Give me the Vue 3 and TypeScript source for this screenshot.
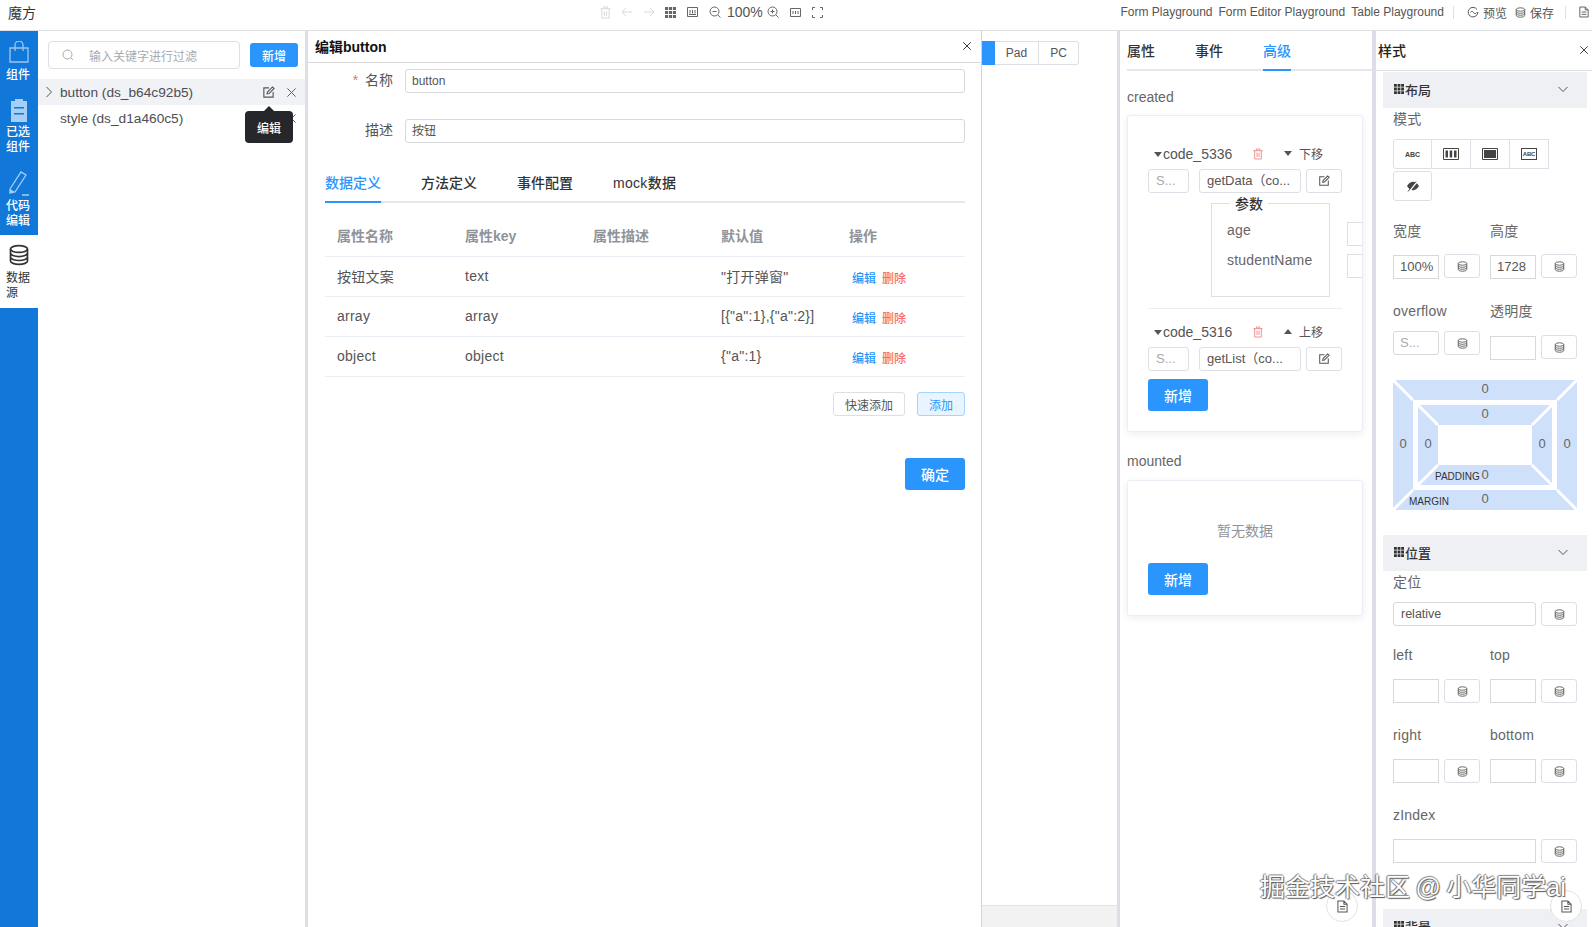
<script setup lang="ts">
const dsRows = [
  { name: '按钮文案', key: 'text', value: '"打开弹窗"' },
  { name: 'array', key: 'array', value: '[{"a":1},{"a":2}]' },
  { name: 'object', key: 'object', value: '{"a":1}' },
]
const tableHead = ['属性名称', '属性key', '属性描述', '默认值', '操作']
const dialogTabs = ['数据定义', '方法定义', '事件配置', 'mock数据']
</script>

<template>
  <div class="page">
    <svg class="defs" width="0" height="0">
      <symbol id="i-db" viewBox="0 0 14 14"><g fill="none" stroke="currentColor" stroke-width="1.1"><ellipse cx="7" cy="3.2" rx="5.4" ry="2.2"/><path d="M1.6 3.2v7.6c0 1.2 2.4 2.2 5.4 2.2s5.4-1 5.4-2.2V3.2M1.6 5.8c0 1.2 2.4 2.2 5.4 2.2s5.4-1 5.4-2.2M1.6 8.3c0 1.2 2.4 2.2 5.4 2.2s5.4-1 5.4-2.2"/></g></symbol>
      <symbol id="i-edit" viewBox="0 0 14 14"><g fill="none" stroke="currentColor" stroke-width="1.2"><path d="M7.5 2H2v10h10V6.5"/><path d="M5.5 8.5l.4-2L11.3 1l1.7 1.7-5.4 5.4z"/></g></symbol>
      <symbol id="i-x" viewBox="0 0 12 12"><path d="M1.5 1.5l9 9M10.5 1.5l-9 9" fill="none" stroke="currentColor" stroke-width="1"/></symbol>
      <symbol id="i-grid" viewBox="0 0 12 12"><path fill="currentColor" d="M0 0h3.4v3.4H0zM4.3 0h3.4v3.4H4.3zM8.6 0H12v3.4H8.6zM0 4.3h3.4v3.4H0zM4.3 4.3h3.4v3.4H4.3zM8.6 4.3H12v3.4H8.6zM0 8.6h3.4V12H0zM4.3 8.6h3.4V12H4.3zM8.6 8.6H12V12H8.6z"/></symbol>
      <symbol id="i-chev" viewBox="0 0 12 12"><path d="M1.5 4l4.5 4.5L10.500 4" fill="none" stroke="currentColor" stroke-width="1"/></symbol>
      <symbol id="i-trash" viewBox="0 0 12 14"><g fill="none" stroke="currentColor" stroke-width="1.100"><path d="M0.500 3h11M4 3V1h4v2M2 3v10h8V3M4.800 5.500v5M7.200 5.500v5"/></g></symbol>
      <symbol id="i-doc" viewBox="0 0 12 14"><g fill="none" stroke="currentColor" stroke-width="1.100"><path d="M1 1h6.500L11 4.500V13H1zM7.500 1v3.500H11M3.200 7h5.600M3.200 9.800h5.600"/></g></symbol>
    </svg>

    <header class="topbar">
      <span class="brand">魔方</span>
      <div class="tools">
        <svg class="ti faint" width="11" height="13"><use href="#i-trash"/></svg>
        <svg class="ti faint" width="12" height="10" viewBox="0 0 12 10"><path d="M11 5H1.500M5 1L1 5l4 4" fill="none" stroke="currentColor"/></svg>
        <svg class="ti faint" width="12" height="10" viewBox="0 0 12 10"><path d="M1 5h9.500M7 1l4 4-4 4" fill="none" stroke="currentColor"/></svg>
        <svg class="ti dark" width="11" height="11"><use href="#i-grid"/></svg>
        <svg class="ti dark" width="11" height="10" viewBox="0 0 11 10"><path d="M.5.500h10v9H.5zM3 3v3.500M5.500 3v3.500M8 3v3.500M2 7.500h7" fill="none" stroke="currentColor"/></svg>
        <svg class="ti dark tight" width="12" height="12" viewBox="0 0 12 12"><g fill="none" stroke="currentColor"><circle cx="5.500" cy="5.500" r="4.500"/><path d="M3.500 5.500h4M9 9l2.500 2.500"/></g></svg>
        <span class="zoom">100%</span>
        <svg class="ti dark" width="12" height="12" viewBox="0 0 12 12"><g fill="none" stroke="currentColor"><circle cx="5.500" cy="5.500" r="4.500"/><path d="M3.500 5.500h4M5.500 3.500v4M9 9l2.500 2.500"/></g></svg>
        <svg class="ti dark" width="11" height="9" viewBox="0 0 11 9"><path d="M.5.500h10v8H.5zM3 3v3M5.500 3v3M8 3v3" fill="none" stroke="currentColor"/></svg>
        <svg class="ti dark" width="11" height="11" viewBox="0 0 11 11"><path d="M.5 3V.5H3M8 .5h2.500V3M10.500 8v2.500H8M3 10.500H.5V8" fill="none" stroke="currentColor"/></svg>
      </div>
      <div class="links">
        <a>Form Playground</a><a>Form Editor Playground</a><a>Table Playground</a>
        <i class="sep"></i>
        <svg class="ti" width="12" height="12" viewBox="0 0 12 12"><g fill="none" stroke="currentColor"><path d="M10 3.500A4.800 4.800 0 1 0 10.800 6"/><path d="M3.500 6.500c1-1.500 2-1.500 3 0s2 1.500 3 0"/></g></svg>
        <span class="act">预览</span>
        <svg class="ti" width="11" height="11"><use href="#i-db"/></svg>
        <span class="act">保存</span>
        <i class="sep"></i>
        <svg class="ti" width="10" height="12"><use href="#i-doc"/></svg>
      </div>
    </header>

    <div class="body">
      <nav class="rail">
        <div class="rail-item h61">
          <svg width="22" height="22" viewBox="0 0 22 22"><g fill="none" stroke="#9ac8f5" stroke-width="1.300"><path d="M2 7h18v14H2zM7 10V4a4 4 0 0 1 8 0v6"/></g></svg>
          <span>组件</span>
        </div>
        <div class="rail-item h72">
          <svg width="20" height="24" viewBox="0 0 20 24"><path fill="#a5cff5" d="M2 3h4V1h8v2h4v21H2z"/><path fill="#1177d9" d="M5 9h10v1.500H5zM5 15h10v1.500H5z"/></svg>
          <span>已选<br>组件</span>
        </div>
        <div class="rail-item h72">
          <svg width="22" height="26" viewBox="0 0 22 26"><g fill="none" stroke="#a5cff5" stroke-width="1.300"><path d="M2 19L13 2l5 3L7 22l-5 1zM14 25h7"/></g><path fill="#a5cff5" d="M2 19l5 3-5 1z"/></svg>
          <span>代码<br>编辑</span>
        </div>
        <div class="rail-item h73 active">
          <svg width="22" height="22" viewBox="0 0 14 14"><use href="#i-db"/></svg>
          <span>数据<br>源</span>
        </div>
      </nav>

      <aside class="tree">
        <div class="tree-top">
          <div class="search">
            <svg width="12" height="12" viewBox="0 0 12 12"><g fill="none" stroke="#a8abb2"><circle cx="5.500" cy="5.500" r="4.500"/><path d="M9 9l2 2"/></g></svg>
            <span>输入关键字进行过滤</span>
          </div>
          <button class="btn primary small">新增</button>
        </div>
        <div class="tree-row hovered">
          <svg class="caret" width="8" height="12" viewBox="0 0 8 12"><path d="M1.500 1l5 5-5 5" fill="none" stroke="#555"/></svg>
          <span class="tree-label">button (ds_b64c92b5)</span>
          <svg class="tree-edit" width="13" height="13"><use href="#i-edit"/></svg>
          <svg class="tree-x" width="11" height="11"><use href="#i-x"/></svg>
        </div>
        <div class="tree-row">
          <span class="caret-space"></span>
          <span class="tree-label">style (ds_d1a460c5)</span>
          <svg class="tree-x" width="11" height="11"><use href="#i-x"/></svg>
        </div>
        <div class="tooltip">编辑</div>
      </aside>

      <section class="dialog">
        <div class="dlg-title"><span>编辑button</span><svg width="10" height="10"><use href="#i-x"/></svg></div>
        <div class="form-row first">
          <label><em>*</em> 名称</label>
          <div class="field">button</div>
        </div>
        <div class="form-row second">
          <label>描述</label>
          <div class="field">按钮</div>
        </div>
        <div class="dlg-tabs">
          <span v-for="(t, i) in dialogTabs" :key="t" :class="{ on: i === 0 }">{{ t }}</span>
        </div>
        <div class="table">
          <div class="tr th">
            <span v-for="h in tableHead" :key="h">{{ h }}</span>
          </div>
          <div v-for="r in dsRows" :key="r.key" class="tr">
            <span>{{ r.name }}</span><span>{{ r.key }}</span><span></span><span>{{ r.value }}</span>
            <span class="ops"><b class="blue">编辑</b><b class="red">删除</b></span>
          </div>
        </div>
        <div class="dlg-actions">
          <button class="btn ghost">快速添加</button>
          <button class="btn light">添加</button>
        </div>
        <div class="dlg-ok"><button class="btn primary big">确定</button></div>
      </section>

      <section class="canvas">
        <div class="devices">
          <i class="dev-on"></i><span>Pad</span><span>PC</span>
        </div>
        <div class="canvas-foot"></div>
      </section>

      <section class="events">
        <div class="ev-tabs"><span>属性</span><span>事件</span><span class="on">高级</span></div>
        <div class="ev-label first">created</div>
        <div class="card c1">
          <div class="code-head">
            <i class="tri"></i><span class="code-name">code_5336</span>
            <svg class="del" width="10" height="12"><use href="#i-trash"/></svg>
            <i class="tri small"></i><span class="move">下移</span>
          </div>
          <div class="code-row">
            <div class="mini ph w40">S...</div><div class="mini w101">getData（co...</div>
            <div class="mini icon"><svg width="12" height="12"><use href="#i-edit"/></svg></div>
          </div>
          <div class="params-wrap">
            <div class="params">
              <strong>参数</strong>
              <p>age</p><p>studentName</p>
            </div>
            <div class="param-stubs"><i></i><i></i></div>
          </div>
          <hr>
          <div class="code-head">
            <i class="tri"></i><span class="code-name">code_5316</span>
            <svg class="del" width="10" height="12"><use href="#i-trash"/></svg>
            <i class="tri small up"></i><span class="move">上移</span>
          </div>
          <div class="code-row">
            <div class="mini ph w40">S...</div><div class="mini w101">getList（co...</div>
            <div class="mini icon"><svg width="12" height="12"><use href="#i-edit"/></svg></div>
          </div>
          <button class="btn primary add">新增</button>
        </div>
        <div class="ev-label second">mounted</div>
        <div class="card c2">
          <div class="empty">暂无数据</div>
          <button class="btn primary add">新增</button>
        </div>
      </section>

      <aside class="styles">
        <div class="st-title"><strong>样式</strong><svg width="10" height="10"><use href="#i-x"/></svg></div>

        <div class="sec-head"><span><svg width="10" height="10"><use href="#i-grid"/></svg>布局</span><svg width="12" height="12"><use href="#i-chev"/></svg></div>
        <div class="st-body">
          <div class="lab mt3">模式</div>
          <div class="modes">
            <span class="m-txt">ABC</span>
            <span><svg width="16" height="12" viewBox="0 0 16 12"><path d="M.5.500h15v11H.5z" fill="none" stroke="#444"/><path d="M2.500 2.500h2.500v7H2.500zM6.700 2.500h2.500v7H6.700zM11 2.500h2.500v7H11z" fill="#444"/></svg></span>
            <span><svg width="16" height="12" viewBox="0 0 16 12"><path d="M.5.500h15v11H.5z" fill="none" stroke="#444"/><path d="M2 2h12v8H2z" fill="#444"/></svg></span>
            <span><i class="m-box">ABC</i></span>
          </div>
          <div class="modes second">
            <span><svg width="14" height="12" viewBox="0 0 14 12"><path d="M1 6c2-3.200 4-4.300 6-4.300S11 2.800 13 6c-2 3.200-4 4.300-6 4.300S3 9.200 1 6z" fill="#444"/><path d="M3.500 11L11.500 1" stroke="#fff" stroke-width="1.600"/><path d="M2 11.500L10 1.500" stroke="#444" stroke-width="1"/></svg></span>
          </div>

          <div class="pair-grid lab-row">
            <div class="lab">宽度</div><div class="lab">高度</div>
          </div>
          <div class="pair-grid">
            <div class="unit"><div class="sq nudge">100%</div><div class="db"><svg width="11" height="11"><use href="#i-db"/></svg></div></div>
            <div class="unit"><div class="sq nudge">1728</div><div class="db"><svg width="11" height="11"><use href="#i-db"/></svg></div></div>
          </div>
          <div class="pair-grid lab-row l2">
            <div class="lab">overflow</div><div class="lab">透明度</div>
          </div>
          <div class="pair-grid">
            <div class="unit"><div class="sq ph round">S...</div><div class="db"><svg width="11" height="11"><use href="#i-db"/></svg></div></div>
            <div class="unit drop"><div class="sq nudge"></div><div class="db"><svg width="11" height="11"><use href="#i-db"/></svg></div></div>
          </div>

          <div class="boxmodel">
            <svg width="184" height="130" viewBox="0 0 184 130">
              <rect width="184" height="130" fill="#cfe0fa"/>
              <rect x="20" y="20" width="144" height="90" fill="#fff"/>
              <rect x="25" y="25" width="134" height="80" fill="#cfe0fa"/>
              <rect x="45" y="45" width="94" height="40" fill="#fff"/>
              <g stroke="#fff" stroke-width="3">
                <path d="M0 0l20 20M184 0l-20 20M0 130l20-20M184 130l-20-20M25 25l20 20M159 25l-20 20M25 105l20-20M159 105l-20-20"/>
              </g>
            </svg>
            <span class="n" style="left:92px;top:9px">0</span>
            <span class="n" style="left:92px;top:34px">0</span>
            <span class="n" style="left:10px;top:64px">0</span>
            <span class="n" style="left:35px;top:64px">0</span>
            <span class="n" style="left:149px;top:64px">0</span>
            <span class="n" style="left:174px;top:64px">0</span>
            <span class="n" style="left:92px;top:95px">0</span>
            <span class="n" style="left:92px;top:119px">0</span>
            <span class="cap pad">PADDING</span>
            <span class="cap mar">MARGIN</span>
          </div>
        </div>

        <div class="sec-head pos"><span><svg width="10" height="10"><use href="#i-grid"/></svg>位置</span><svg width="12" height="12"><use href="#i-chev"/></svg></div>
        <div class="st-body">
          <div class="lab mt3">定位</div>
          <div class="wide-row first-wide">
            <div class="wide round">relative</div><div class="db"><svg width="11" height="11"><use href="#i-db"/></svg></div>
          </div>
          <div class="pair-grid lab-row l3 l3a"><div class="lab">left</div><div class="lab">top</div></div>
          <div class="pair-grid">
            <div class="unit"><div class="sq"></div><div class="db"><svg width="11" height="11"><use href="#i-db"/></svg></div></div>
            <div class="unit"><div class="sq"></div><div class="db"><svg width="11" height="11"><use href="#i-db"/></svg></div></div>
          </div>
          <div class="pair-grid lab-row l3"><div class="lab">right</div><div class="lab">bottom</div></div>
          <div class="pair-grid">
            <div class="unit"><div class="sq"></div><div class="db"><svg width="11" height="11"><use href="#i-db"/></svg></div></div>
            <div class="unit"><div class="sq"></div><div class="db"><svg width="11" height="11"><use href="#i-db"/></svg></div></div>
          </div>
          <div class="lab z">zIndex</div>
          <div class="wide-row"><div class="wide"></div><div class="db"><svg width="11" height="11"><use href="#i-db"/></svg></div></div>
        </div>
        <div class="sec-head last"><span><svg width="10" height="10"><use href="#i-grid"/></svg>背景</span><svg width="12" height="12"><use href="#i-chev"/></svg></div>
      </aside>
    </div>

    <div class="fab f1"><svg width="11" height="13"><use href="#i-doc"/></svg></div>
    <div class="fab f2"><svg width="11" height="13"><use href="#i-doc"/></svg></div>
    <div class="watermark">掘金技术社区 @ 小华同学ai</div>
  </div>
</template>

<style>
html, body { margin: 0; overflow: hidden; background: #fff; }
</style>

<style scoped>
* { box-sizing: border-box; }
.page {
  position: relative;
  width: 1592px;
  height: 927px;
  overflow: hidden;
  font-family: "Liberation Sans", "Noto Sans CJK SC", sans-serif;
  font-size: 14px;
  color: #4a4d52;
  background: #fff;
}
.defs { position: absolute; }
.topbar {
  height: 31px;
  border-bottom: 1px solid #dcdfe3;
  display: flex;
  align-items: center;
  padding-left: 8px;
  padding-bottom: 6px;
}
.brand { font-size: 14px; color: #333; width: 28px; margin-top: -1px; }
.tools { display: flex; align-items: center; margin-left: 564px; color: #555; }
.ti { display: block; flex: none; }
.tools .ti { margin-right: 10px; }
.tools .ti.faint { color: #d9d9d9; margin-right: 10px; }
.tools .ti.dark { color: #666; margin-right: 11px; }
.tools .ti.dark.tight { margin-right: 6px; }
.zoom { font-size: 14px; color: #555; width: 40px; }
.links { margin-left: auto; display: flex; align-items: center; font-size: 12px; color: #555; padding-right: 3px; }
.links a { margin-right: 6px; }
.links a:nth-child(3) { margin-right: 0; }
.sep { display: block; width: 1px; height: 13px; background: #dcdfe3; margin: 0 13px 0 9px; }
.act { margin: 0 8px 0 4px; font-size: 12px; }
.act + .sep { margin-left: 3px; }

.body { display: flex; height: 896px; }
.rail { width: 38px; background: #1177d9; flex: none; }
.rail-item {
  display: flex; flex-direction: column; align-items: center; color: #fff;
  padding-top: 10px; font-size: 12px; line-height: 15px;
}
.rail-item span { width: 24px; margin: 3px 0 0 -2px; font-weight: 500; display: block; }
.h61 { height: 60px; }
.h61 span { margin-top: 5px; }
.h72 { height: 72px; padding-top: 7px; }
.h73 { height: 73px; padding-top: 9px; }
.active { background: #fff; color: #333; }
.active span { font-weight: 400; margin-top: 5px; }
.tree {
  position: relative; width: 270px; flex: none;
  border-right: 3px solid #dcdfe6;
}
.tree-top { display: flex; align-items: flex-start; padding: 10px 0 0 10px; height: 48px; }
.search {
  width: 192px; height: 28px; border: 1px solid #dcdfe6; border-radius: 4px;
  display: flex; align-items: center; padding-left: 13px; color: #a8abb2; font-size: 12px;
}
.search svg { margin-right: 15px; }
.btn { font-family: inherit; border: 1px solid transparent; border-radius: 3px; padding: 0; cursor: pointer; display: block; }
.primary { background: #2a96fd; color: #fff; font-weight: 500; }
.small { width: 48px; height: 24px; font-size: 12px; margin: 2px 0 0 10px; }
.tree-row { height: 26px; display: flex; align-items: center; padding-left: 7px; font-size: 13.700px; }
.hovered { background: #f0f2f5; }
.caret { margin-right: 7px; flex: none; }
.caret-space { width: 15px; flex: none; }
.tree-label { flex: 1; color: #4c4f54; }
.tree-edit { color: #555; margin-right: 11px; }
.tree-x { color: #555; margin-right: 8px; }
.tooltip {
  position: absolute; left: 207px; top: 80px; width: 48px; height: 32px;
  background: #25272b; color: #fff; border-radius: 4px; font-size: 12px; font-weight: 500;
  display: flex; align-items: center; justify-content: center;
}
.tooltip::before {
  content: ""; position: absolute; top: -5px; left: 19px; border: 5px solid transparent; border-top: 0; border-bottom-color: #25272b;
}

.dialog { width: 674px; flex: none; border-right: 1px solid #d3d3d3; border-top: 1px solid #dcdfe3; margin-top: -1px; height: 897px; }
.dlg-title {
  height: 32px; border-bottom: 1px solid #d8d8d8; padding: 0 9px 2px 7px;
  display: flex; justify-content: space-between; align-items: center; color: #111; font-weight: 700; font-size: 14px;
}
.form-row { display: flex; align-items: center; padding-right: 16px; }
.form-row.first { margin-top: 6px; }
.form-row.second { margin-top: 26px; }
.form-row label { width: 85px; text-align: right; margin-right: 12px; font-size: 14px; color: #555; padding-bottom: 4px; }
.form-row em { color: #f56c6c; font-style: normal; margin-right: 3px; }
.field {
  flex: 1; height: 24px; border: 1px solid #d6d8dc; border-radius: 3px; padding-left: 6px;
  font-size: 12px; line-height: 22px; color: #555;
}
.dlg-tabs {
  margin: 27px 16px 0 17px; display: flex; gap: 40px; border-bottom: 2px solid #e4e7ed; height: 33px;
  font-size: 14px; color: #333;
}
.dlg-tabs span { height: 33px; padding-top: 2px; font-weight: 500; }
.dlg-tabs span:last-child { letter-spacing: .3px; }
.dlg-tabs .on { color: #2a96fd; border-bottom: 2px solid #2a96fd; }
.table { margin: 14px 16px 0 17px; font-size: 14px; }
.tr {
  display: grid; grid-template-columns: 128px 128px 128px 128px 127px; height: 40px; padding-left: 12px;
  border-bottom: 1px solid #ebeef5; align-items: center; color: #555; padding-bottom: 2px; letter-spacing: .25px;
}
.th { color: #909399; font-weight: 700; padding-bottom: 4px; height: 40px; letter-spacing: 0; }
.ops { display: flex; gap: 6px; font-size: 12px; margin-left: 3px; padding-top: 3px; letter-spacing: 0; }
.ops b { font-weight: 500; }
.blue { color: #2a96fd; }
.red { color: #f56c6c; }
.dlg-actions { margin: 15px 16px 0 0; display: flex; justify-content: flex-end; gap: 12px; }
.ghost { width: 72px; height: 24px; background: #fff; border-color: #dcdfe6; color: #555; font-size: 12px; }
.light { width: 48px; height: 24px; background: #e8f4ff; border-color: #a7d3fc; color: #2a96fd; font-size: 12px; }
.dlg-ok { margin: 42px 16px 0 0; display: flex; justify-content: flex-end; }
.big { width: 60px; height: 32px; font-size: 14px; }

.canvas { width: 135px; flex: none; display: flex; flex-direction: column; justify-content: space-between; }
.devices { display: flex; margin-top: 10px; height: 24px; font-size: 12px; }
.dev-on { width: 13px; background: #2a96fd; display: block; }
.devices span {
  border: 1px solid #dcdfe6; border-left: 0; height: 24px; display: flex; align-items: center; justify-content: center; color: #555;
}
.devices span:nth-child(2) { width: 44px; }
.devices span:nth-child(3) { width: 40px; border-radius: 0 3px 3px 0; }
.canvas-foot { height: 22px; background: #f2f2f2; border-top: 1px solid #e5e5e5; }

.events { width: 259px; flex: none; border-left: 3px solid #dcdfe6; border-right: 4px solid #dcdde8; padding-left: 7px; }
.ev-tabs { height: 40px; border-bottom: 2px solid #e4e7ed; display: flex; gap: 40px; font-size: 14px; font-weight: 500; color: #333; padding-top: 9px; }
.ev-tabs span { height: 31px; }
.ev-tabs .on { color: #2a96fd; border-bottom: 2px solid #2a96fd; }
.ev-label { color: #666; font-size: 14px; line-height: 16px; }
.ev-label.first { margin-top: 18px; }
.ev-label.second { margin-top: 21px; }
.card {
  width: 236px; border: 1px solid #ebeef5; border-radius: 3px; box-shadow: 0 2px 8px rgba(0,0,0,.07);
  padding: 0 20px; overflow: hidden;
}
.c1 { height: 317px; margin-top: 10px; padding-top: 30px; }
.c2 { height: 136px; margin-top: 11px; }
.code-head { display: flex; align-items: center; height: 16px; font-size: 14px; color: #555; }
.tri { display: block; width: 0; height: 0; border: 4px solid transparent; border-top: 5px solid #555; border-bottom: 0; margin: 0 1px 0 6px; }
.tri.small { margin: -1px 7px 0 0; }
.tri.up { border-top: 0; border-bottom: 5px solid #555; }
.code-name { width: 90px; }
.del { color: #e88; margin-right: 21px; }
.move { font-size: 12px; margin-top: -2px; }
.code-row { display: flex; margin-top: 7px; }
.mini { height: 24px; border: 1px solid #dcdfe6; border-radius: 3px; font-size: 13px; line-height: 22px; padding-left: 7px; color: #555; white-space: nowrap; overflow: hidden; }
.ph { color: #a8abb2; }
.w40 { width: 41px; margin-right: 10px; }
.w101 { width: 102px; margin-right: 5px; }
.icon { width: 36px; display: flex; align-items: center; justify-content: center; padding: 0; }
.params-wrap { position: relative; height: 96px; margin-top: 10px; padding-left: 63px; }
.params { position: relative; width: 119px; height: 94px; border: 1px solid #dcdfe6; padding: 18px 15px 0; }
.params strong { position: absolute; top: -7px; left: 18px; background: #fff; padding: 0 5px; font-size: 14px; font-weight: 500; line-height: 14px; color: #333; }
.params p { margin: 0 0 14px; font-size: 14px; line-height: 16px; color: #666; letter-spacing: .2px; }
.param-stubs { position: absolute; left: 199px; top: 19px; display: flex; flex-direction: column; gap: 8px; }
.param-stubs i { display: block; width: 20px; height: 24px; border: 1px solid #dcdfe6; }
hr { border: 0; border-top: 1px solid #ebeef5; margin: 9px 0 15px; }
.add { width: 60px; height: 32px; font-size: 14px; margin-top: 8px; }
.empty { text-align: center; color: #909399; font-size: 14px; margin-top: 42px; line-height: 16px; }
.c2 .add { margin-top: 24px; }

.styles { flex: 1; padding-left: 7px; padding-right: 5px; }
.st-title {
  height: 40px; display: flex; justify-content: space-between; align-items: center; color: #222; font-size: 14px;
  margin: 0 -5px 0 -7px; padding: 0 3px 2px 2px; border-bottom: 1px solid #dcdfe3;
}
.st-title strong { font-weight: 500; }
.sec-head { height: 36px; background: #eef0f3; margin-top: 1px; display: flex; justify-content: space-between; align-items: center; padding: 0 18px 2px 11px; font-size: 13px; color: #333; font-weight: 500; }
.sec-head span { display: flex; align-items: center; gap: 1px; }
.sec-head > svg { color: #555; }
.sec-head.pos { margin-top: 25px; }
.sec-head.last { margin-top: 46px; }
.st-body { padding-left: 10px; }
.lab { font-size: 14px; color: #666; line-height: 16px; letter-spacing: .2px; }
.mt3 { margin-top: 3px; }
.modes { display: flex; margin-top: 12px; }
.modes span { width: 39px; height: 30px; border: 1px solid #dcdfe6; border-left: 0; display: flex; align-items: center; justify-content: center; font-size: 7px; font-weight: 700; color: #444; }
.modes span:first-child { border-left: 1px solid #dcdfe6; border-radius: 3px 0 0 3px; }
.m-box { display: block; width: 16px; height: 12px; border: 1px solid #444; font-style: normal; font-size: 6px; line-height: 10px; text-align: center; letter-spacing: -.2px; }
.modes.second { margin-top: 2px; }
.modes.second span { border-radius: 3px; }
.pair-grid { display: grid; grid-template-columns: 97px 87px; }
.lab-row { margin-top: 22px; margin-bottom: 15px; }
.lab-row.l2 { margin-top: 24px; margin-bottom: 12px; }
.lab-row.l3 { margin-top: 24px; margin-bottom: 16px; }
.lab-row.l3a { margin-top: 21px; }
.unit { display: flex; gap: 5px; align-items: flex-start; }
.unit.drop { margin-top: 4px; }
.sq { width: 46px; height: 24px; border: 1px solid #d6d8dc; font-size: 13px; line-height: 22px; padding-left: 6px; color: #555; }
.sq.nudge { margin-top: 1px; }
.sq.ph { color: #a8abb2; }
.round { border-radius: 3px; }
.db { width: 36px; height: 24px; border: 1px solid #dcdfe6; border-radius: 3px; display: flex; align-items: center; justify-content: center; color: #555; flex: none; }
.boxmodel { position: relative; width: 184px; height: 130px; margin-top: 20px; }
.boxmodel svg { display: block; }
.n { position: absolute; transform: translate(-50%, -50%); font-size: 13px; color: #666; line-height: 14px; }
.cap { position: absolute; font-size: 10px; color: #333; line-height: 10px; }
.pad { left: 42px; top: 92px; }
.mar { left: 16px; top: 117px; }
.wide-row { display: flex; gap: 5px; margin-top: 11px; }
.wide-row.first-wide { margin-top: 12px; }
.wide { width: 143px; height: 24px; border: 1px solid #d6d8dc; font-size: 12.500px; line-height: 22px; padding-left: 7px; color: #555; }
.lab.z { margin-top: 24px; margin-bottom: 16px; }

.fab {
  position: absolute; width: 32px; height: 32px; border: 1px solid #e3e3e3; border-radius: 50%;
  background: #fff; display: flex; align-items: center; justify-content: center; color: #555;
}
.f1 { left: 1326px; top: 890px; }
.f2 { left: 1550px; top: 890px; }
.watermark {
  position: absolute; left: 1260px; top: 871px; font-size: 25px; line-height: 32px; color: #fff; white-space: nowrap; word-spacing: -1.500px;
  text-shadow: 1px 1px 1px #555, -1px 0 1px #777, 0 -1px 1px #888;
}
</style>
